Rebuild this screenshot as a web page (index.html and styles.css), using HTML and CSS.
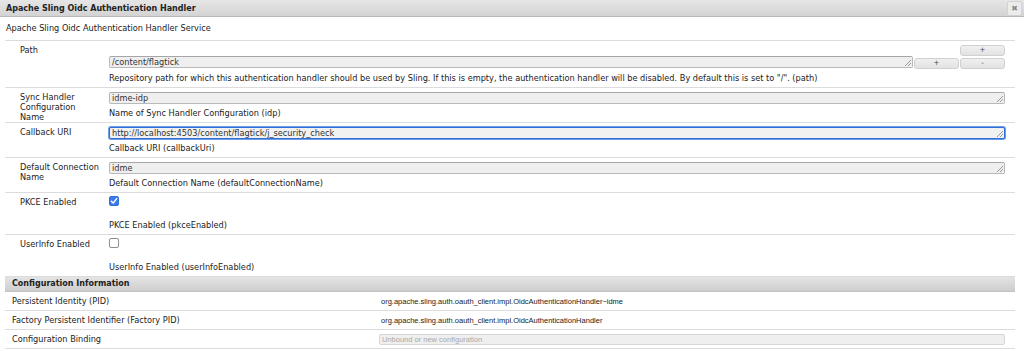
FILE: index.html
```html
<!DOCTYPE html>
<html lang="en">
<head>
    <meta charset="UTF-8">
    <title>Apache Sling Oidc Authentication Handler</title>
    <link rel="stylesheet" href="styles.css">
</head>
<body>
    <div class="dialog">
        <div class="titlebar">
            <span class="title">Apache Sling Oidc Authentication Handler</span>
            <span class="close">&#10006;</span>
        </div>

        <div class="content">
            <div class="service">Apache Sling Oidc Authentication Handler Service</div>

            <!-- Path (multi value) -->
            <div class="row">
                <div class="label">Path</div>
                <div class="value">
                    <div class="add-line"><button class="btn">+</button></div>
                    <div class="multi">
                        <div class="field">/content/flagtick<span class="grip"></span></div>
                        <button class="btn">+</button>
                        <button class="btn">-</button>
                    </div>
                    <div class="desc">Repository path for which this authentication handler should be used by Sling. If this is empty, the authentication handler will be disabled. By default this is set to "/". (path)</div>
                </div>
            </div>

            <div class="row">
                <div class="label">Sync Handler Configuration Name</div>
                <div class="value">
                    <div class="field">idme-idp<span class="grip"></span></div>
                    <div class="desc">Name of Sync Handler Configuration (idp)</div>
                </div>
            </div>

            <div class="row">
                <div class="label">Callback URI</div>
                <div class="value">
                    <div class="field focused">http://localhost:4503/content/flagtick/j_security_check<span class="grip"></span></div>
                    <div class="desc">Callback URI (callbackUri)</div>
                </div>
            </div>

            <div class="row">
                <div class="label">Default Connection Name</div>
                <div class="value">
                    <div class="field">idme<span class="grip"></span></div>
                    <div class="desc">Default Connection Name (defaultConnectionName)</div>
                </div>
            </div>

            <div class="row check-row">
                <div class="label">PKCE Enabled</div>
                <div class="value">
                    <span class="checkbox checked">
                        <svg width="8" height="8" viewBox="0 0 8 8"><path d="M1.3 4.2 L3.2 6 L6.7 1.6" fill="none" stroke="#fff" stroke-width="1.4" stroke-linecap="round" stroke-linejoin="round"/></svg>
                    </span>
                    <div class="desc">PKCE Enabled (pkceEnabled)</div>
                </div>
            </div>

            <div class="row check-row">
                <div class="label">UserInfo Enabled</div>
                <div class="value">
                    <span class="checkbox"></span>
                    <div class="desc">UserInfo Enabled (userInfoEnabled)</div>
                </div>
            </div>

            <!-- Configuration Information -->
            <div class="info-head">Configuration Information</div>
            <div class="info-row">
                <div class="info-label">Persistent Identity (PID)</div>
                <div class="info-value">org.apache.sling.auth.oauth_client.impl.OidcAuthenticationHandler~idme</div>
            </div>
            <div class="info-row">
                <div class="info-label">Factory Persistent Identifier (Factory PID)</div>
                <div class="info-value">org.apache.sling.auth.oauth_client.impl.OidcAuthenticationHandler</div>
            </div>
            <div class="info-row">
                <div class="info-label">Configuration Binding</div>
                <div class="info-value"><div class="binding">Unbound or new configuration</div></div>
            </div>
        </div>
    </div>
</body>
</html>
```

FILE: styles.css
```css
body {
    margin: 0;
    padding: 0;
    background-color: #fff;
    color: #222;
    font-family: "DejaVu Sans", Verdana, sans-serif;
    font-size: 8.2px;
}
.titlebar {
    height: 16px;
    display: flex;
    align-items: center;
    justify-content: space-between;
    padding: 0 2px 0 6px;
    background: linear-gradient(#e6e6e6, #d3d3d3);
    border-bottom: 1px solid #b9b9b9;
}
.title {
    font-weight: bold;
    font-size: 8px;
    color: #222;
}
.close {
    width: 13px;
    height: 13px;
    display: flex;
    align-items: center;
    justify-content: center;
    background-color: #ececec;
    border: 1px solid #d2d2d2;
    border-radius: 2px;
    color: #8a8a8a;
    font-size: 8px;
}
.content {
    margin: 0 9px 0 5px;
}
.service {
    height: 23px;
    line-height: 23px;
    padding-left: 1px;
    border-bottom: 1px solid #dcdcdc;
}
.row {
    display: grid;
    grid-template-columns: 104px 1fr;
    border-bottom: 1px solid #dcdcdc;
    padding-top: 4px;
}
.label {
    padding: 0 8px 0 15px;
    line-height: 10px;
}
.value {
    padding: 0 10px 4px 0;
}
.field {
    position: relative;
    height: 10px;
    line-height: 10px;
    padding-left: 2px;
    background-color: #efefef;
    border: 1px solid #b9b9b9;
    border-top-color: #a6a6a6;
    border-radius: 2px;
    color: #333;
}
.field.focused {
    background-color: #f1f1f1;
    border: 1px solid #2f6fd8;
    box-shadow: 0 0 0 1px #6e9be6;
}
.grip {
    position: absolute;
    right: 1px;
    bottom: 1px;
    width: 6px;
    height: 6px;
    background: linear-gradient(135deg, transparent 45%, #999 46%, #999 54%, transparent 55%, transparent 70%, #999 71%, #999 79%, transparent 80%);
}
.desc {
    line-height: 10px;
    margin-top: 4px;
}
.add-line {
    display: flex;
    justify-content: flex-end;
    height: 11px;
}
.multi {
    display: flex;
    align-items: flex-start;
    gap: 1px;
}
.multi .field {
    flex: 1;
}
.btn {
    width: 45px;
    height: 11px;
    padding: 0;
    background: linear-gradient(#f0f0f0, #e2e2e2);
    border: 1px solid #d0d0d0;
    border-radius: 3px;
    color: #444;
    font-family: "DejaVu Sans", Verdana, sans-serif;
    font-size: 7px;
    line-height: 9px;
}
.multi .btn {
    margin-top: 2px;
}
.check-row {
    padding-top: 3px;
}
.check-row .label {
    padding-top: 1px;
}
.checkbox {
    display: flex;
    align-items: center;
    justify-content: center;
    box-sizing: border-box;
    width: 10px;
    height: 10px;
    background-color: #fff;
    border: 1px solid #8d8d8d;
    border-radius: 2px;
}
.checkbox.checked {
    background-color: #3a7cf0;
    border-color: #2f6fd8;
}
.check-row .desc {
    margin-top: 14px;
}
.info-head {
    height: 14px;
    line-height: 14px;
    padding-left: 7px;
    font-weight: bold;
    font-size: 8px;
    background: linear-gradient(#e4e4e4, #cdcdcd);
    border-bottom: 1px solid #c2c2c2;
}
.info-row {
    display: grid;
    grid-template-columns: 376px 1fr;
    align-items: center;
    height: 18px;
    border-bottom: 1px solid #dcdcdc;
}
.info-label {
    padding-left: 7px;
}
.info-value {
    padding-right: 10px;
    font-family: "Liberation Sans", Arial, sans-serif;
    font-size: 7.5px;
    color: #222;
}
.binding {
    height: 9px;
    line-height: 9px;
    margin-left: -2px;
    padding-left: 2px;
    background-color: #efefef;
    border: 1px solid #d6d6d6;
    border-radius: 2px;
    color: #a9a9a9;
}
```
